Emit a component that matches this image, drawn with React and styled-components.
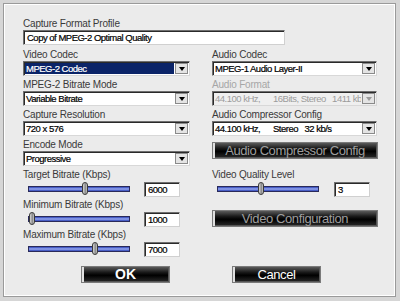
import React from 'react';
import styled, { createGlobalStyle } from 'styled-components';

const Global = createGlobalStyle`
  html, body { margin: 0; padding: 0; background: #d9d9d9; }
  body { font-family: "Liberation Sans", Arial, sans-serif; }
`;

// STYLES
const Frame = styled.div`
  width: 400px;
  height: 301px;
  box-sizing: border-box;
  padding: 3px 4px 4px 3px;
  background: #d6d6d6;
`;

const Panel = styled.div`
  height: 100%;
  box-sizing: border-box;
  border: 1px solid #9a9a9a;
  box-shadow: inset 1px 1px 0 #ffffff, inset -1px -1px 0 #ffffff;
  background: #ebebeb;
  padding: 14px 18px 0 19px;
`;

const Label = styled.div`
  font-size: 10px;
  letter-spacing: -0.2px;
  line-height: 12px;
  height: 12px;
  color: ${p => (p.disabled ? '#a6a6a6' : '#3a3a3a')};
  white-space: nowrap;
`;

const TextBox = styled.div`
  box-sizing: border-box;
  width: ${p => p.w}px;
  height: 15px;
  background: #fff;
  border-top: 1px solid #6f6f6f;
  border-left: 1px solid #6f6f6f;
  border-bottom: 1px solid #d0d0d0;
  border-right: 1px solid #d0d0d0;
  box-shadow: inset 1px 1px 0 #2a2a2a;
  font-size: 9.5px;
  letter-spacing: -0.5px;
  -webkit-text-stroke: 0.2px #000;
  line-height: 13px;
  padding-left: 3px;
  color: #000;
  white-space: nowrap;
  overflow: hidden;
`;

const Profile = styled.div`
  margin-bottom: 4px;
`;

const Columns = styled.div`
  display: grid;
  grid-template-columns: 167px 165px;
  column-gap: 22px;
  grid-auto-rows: 30px;
`;

const Field = styled.div`
  display: flex;
  flex-direction: column;
`;

const SelectBox = styled.div`
  box-sizing: border-box;
  height: 15px;
  display: flex;
  align-items: stretch;
  background: ${p => (p.disabled ? '#efefef' : '#fff')};
  border-top: 1px solid #6f6f6f;
  border-left: 1px solid #6f6f6f;
  border-bottom: 1px solid #d8d8d8;
  border-right: 1px solid #d8d8d8;
  box-shadow: inset 1px 1px 0 #2a2a2a;
`;

const SelectValue = styled.div`
  flex: 1;
  margin: 1px;
  padding-left: 1px;
  font-size: 9.5px;
  letter-spacing: -0.5px;
  -webkit-text-stroke: ${p => (p.disabled ? 0 : 0.2)}px currentColor;
  line-height: 11px;
  white-space: pre;
  overflow: hidden;
  color: ${p => (p.selected ? '#fff' : p.disabled ? '#9c9c9c' : '#000')};
  background: ${p => (p.selected ? '#0b2468' : 'transparent')};
`;

const Arrow = styled.div`
  width: 13px;
  margin: 1px 1px 1px 0;
  box-sizing: border-box;
  background: #e4e4e4;
  border: 1px solid #8a8a8a;
  display: flex;
  align-items: center;
  justify-content: center;
  &::after {
    content: '';
    border-left: 3px solid transparent;
    border-right: 3px solid transparent;
    border-top: 4px solid ${p => (p.disabled ? '#9a9a9a' : '#000')};
  }
`;

const SliderRow = styled.div`
  display: flex;
  align-items: center;
  height: 16px;
`;

const Track = styled.div`
  position: relative;
  width: 102px;
  height: 6px;
  margin-left: 5px;
  margin-right: ${p => p.gap}px;
  box-sizing: border-box;
  border: 1px solid #2a2a5a;
  background: linear-gradient(to bottom, #2c44b8 0%, #9aaaf0 50%, #2c44b8 100%);
`;

const Thumb = styled.div`
  position: absolute;
  top: -5px;
  width: 6px;
  height: 13px;
  box-sizing: border-box;
  margin-left: -3px;
  border: 1px solid #3a3a3a;
  border-radius: 3px;
  background: linear-gradient(to right, #d8d8d8, #8a8a8a 60%, #c8c8c8);
`;

const Glossy = styled.div`
  box-sizing: border-box;
  width: ${p => p.w}px;
  height: 17px;
  margin-top: ${p => p.top || 0}px;
  border: 1px solid #7a7a7a;
  background: linear-gradient(to bottom, #5a5a5a 0%, #1a1a1a 35%, #000 55%, #2a2a2a 100%);
  box-shadow: inset 2px 0 0 #e0e0e0, inset -1px -1px 0 #555;
  display: flex;
  align-items: center;
  justify-content: center;
  font-size: ${p => (p.bold ? 14 : 13)}px;
  letter-spacing: ${p => (p.bold ? 0 : -0.4)}px;
  font-weight: ${p => (p.bold ? 700 : 400)};
  line-height: 15px;
  color: ${p => (p.bright ? '#ffffff' : '#9e9e9e')};
  white-space: nowrap;
`;

const Footer = styled.div`
  display: flex;
  padding-left: 58px;
  gap: 62px;
  margin-top: 7px;
`;

function Select({ value, selected, disabled }) {
  return (
    <SelectBox disabled={disabled}>
      <SelectValue selected={selected} disabled={disabled}>{value}</SelectValue>
      <Arrow disabled={disabled} />
    </SelectBox>
  );
}

function Slider({ label, pos, value, gap = 14 }) {
  return (
    <Field>
      <Label>{label}</Label>
      <SliderRow>
        <Track gap={gap}>
          <Thumb style={{ left: `${pos}%` }} />
        </Track>
        <TextBox w={36}>{value}</TextBox>
      </SliderRow>
    </Field>
  );
}

export default function App() {
  return (
    <Frame>
      <Global />
      <Panel>
        <Profile>
          <Label>Capture Format Profile</Label>
          <TextBox w={262}>Copy of MPEG-2 Optimal Quality</TextBox>
        </Profile>
        <Columns>
          <Field>
            <Label>Video Codec</Label>
            <Select value="MPEG-2 Codec" selected />
          </Field>
          <Field>
            <Label>Audio Codec</Label>
            <Select value="MPEG-1 Audio Layer-II" />
          </Field>

          <Field>
            <Label>MPEG-2 Bitrate Mode</Label>
            <Select value="Variable Bitrate" />
          </Field>
          <Field>
            <Label disabled>Audio Format</Label>
            <Select disabled value={'44.100 kHz,      16Bits, Stereo   1411 kb/s'} />
          </Field>

          <Field>
            <Label>Capture Resolution</Label>
            <Select value="720 x 576" />
          </Field>
          <Field>
            <Label>Audio Compressor Config</Label>
            <Select value={'44.100 kHz,      Stereo   32 kb/s'} />
          </Field>

          <Field>
            <Label>Encode Mode</Label>
            <Select value="Progressive" />
          </Field>
          <Glossy w={166} top={3}>Audio Compressor Config</Glossy>

          <Slider label="Target Bitrate (Kbps)" pos={56} value="6000" />
          <Slider label="Video Quality Level" pos={43} value="3" gap={15} />

          <Slider label="Minimum Bitrate (Kbps)" pos={3} value="1000" />
          <Glossy w={166} top={11}>Video Configuration</Glossy>

          <Slider label="Maximum Bitrate (Kbps)" pos={66} value="7000" />
        </Columns>
        <Footer>
          <Glossy w={89} bright bold>OK</Glossy>
          <Glossy w={89} bright>Cancel</Glossy>
        </Footer>
      </Panel>
    </Frame>
  );
}
